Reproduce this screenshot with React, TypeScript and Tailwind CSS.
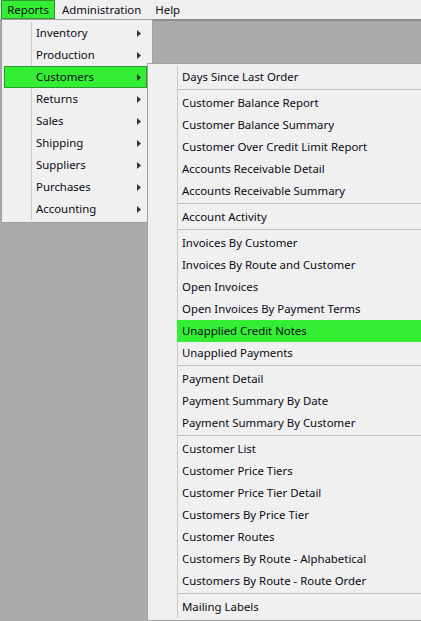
const MAIN = ["Inventory", "Production", "Customers", "Returns", "Sales", "Shipping", "Suppliers", "Purchases", "Accounting"];

// null = separator
const CUSTOMERS: (string | null)[] = [
  "Days Since Last Order",
  null,
  "Customer Balance Report",
  "Customer Balance Summary",
  "Customer Over Credit Limit Report",
  "Accounts Receivable Detail",
  "Accounts Receivable Summary",
  null,
  "Account Activity",
  null,
  "Invoices By Customer",
  "Invoices By Route and Customer",
  "Open Invoices",
  "Open Invoices By Payment Terms",
  "Unapplied Credit Notes",
  "Unapplied Payments",
  null,
  "Payment Detail",
  "Payment Summary By Date",
  "Payment Summary By Customer",
  null,
  "Customer List",
  "Customer Price Tiers",
  "Customer Price Tier Detail",
  "Customers By Price Tier",
  "Customer Routes",
  "Customers By Route - Alphabetical",
  "Customers By Route - Route Order",
  null,
  "Mailing Labels",
];

function Arrow() {
  return (
    <svg width="4" height="7" viewBox="0 0 4 7" className="shrink-0">
      <path d="M0 0 L4 3.5 L0 7 Z" fill="#333333" />
    </svg>
  );
}

export default function App() {
  return (
    <div className="relative w-[421px] h-[621px] overflow-hidden bg-[#ababab] text-[11.4px] text-[#0a0a14] font-['Noto_Sans','Liberation_Sans',sans-serif]">
      <div className="flex h-[21px] items-start bg-[#f0f0f0] border-b-2 border-[#8c8c8c]">
        <div className="ml-px flex h-[19px] w-[54px] items-center justify-center bg-[#33ee33] border border-[#2a9a2a]">Reports</div>
        <div className="flex h-[19px] items-center pl-[7px]">Administration</div>
        <div className="flex h-[19px] items-center pl-[14px]">Help</div>
      </div>

      <div className="absolute left-px top-[19px] w-[152px] h-[204px] bg-[#f0f0f0] border border-[#a0a0a0] pt-[2px] pl-[2px] pr-[5px]">
        <div className="absolute left-[29px] top-[2px] bottom-[2px] w-px bg-[#c8c8c8]" />
        {MAIN.map((m) => (
          <div
            key={m}
            className={
              m === "Customers"
                ? "relative flex h-[22px] items-center justify-between pl-[31px] pr-[5px] bg-[#33ee33] border border-[#2a9a2a]"
                : "relative flex h-[22px] items-center justify-between pl-[32px] pr-[6px]"
            }
          >
            <span>{m}</span>
            <Arrow />
          </div>
        ))}
      </div>

      <div className="absolute left-[147px] top-[63px] w-[275px] h-[558px] bg-[#f0f0f0] border border-[#a0a0a0] pt-[2px] pl-[2px]">
        <div className="absolute left-[29px] top-[2px] bottom-[2px] w-px bg-[#c8c8c8]" />
        {CUSTOMERS.map((c, i) =>
          c === null ? (
            <div key={i} className="ml-[27px] h-[4px] pt-px">
              <div className="h-px w-full bg-[#c0c0c0]" />
            </div>
          ) : (
            <div
              key={i}
              className={
                c === "Unapplied Credit Notes"
                  ? "relative ml-[27px] flex h-[22px] items-center bg-[#33ee33] pl-[5px]"
                  : "relative flex h-[22px] items-center pl-[32px]"
              }
            >
              {c}
            </div>
          )
        )}
      </div>
    </div>
  );
}
